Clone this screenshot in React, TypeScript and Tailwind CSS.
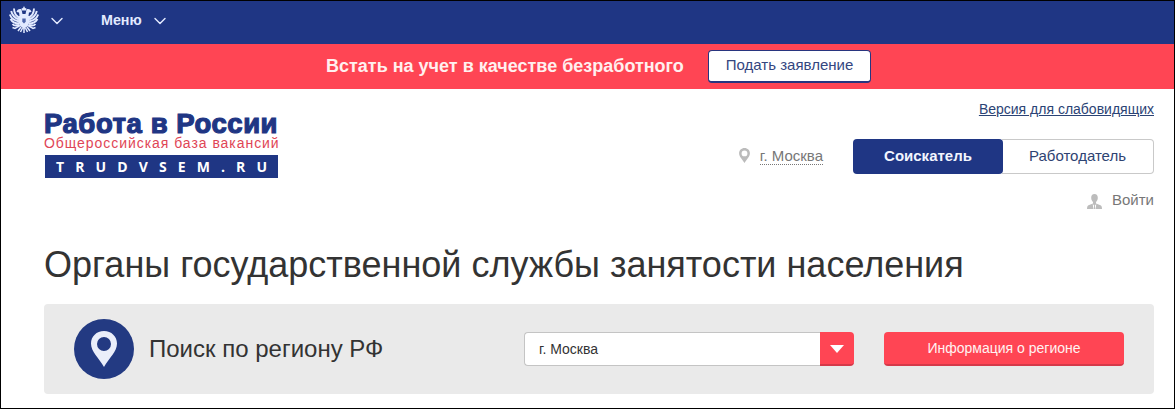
import { FiChevronDown } from 'react-icons/fi';

interface IconProps {
  className?: string;
}

function EagleIcon({ className }: IconProps) {
  return (
    <svg viewBox="0 0 30 28" className={className} fill="currentColor">
      <path d="M15 0l1 2 1.500.5-.5 2h-4l-.5-2L14 2z" />
      <path d="M12.500 3.500c-2-1-4.500 0-5 2.500l2.500.5c.5 1.500 0 3 1 4.500l4 1 4-1c1-1.500.5-3 1-4.500l2.500-.5c-.5-2.500-3-3.500-5-2.500L16.500 8h-3z" />
      <path d="M10 10h10v7c0 3-3 4-5 6-2-2-5-3-5-6z" />
      <g fill="none" stroke="currentColor" strokeWidth="1.900">
        <path d="M11 12C7 10 5 7 5 2.500M10 13.500C6 12 3 9 2.200 5M10 15.500C5 14.500 2 12 .8 8.500M10 17.500c-4 0-6.500-1-8.500-4.500M10 19c-3 1-5 1-6.500-1" />
        <path d="M19 12c4-2 6-5 6-9.500M20 13.500c4-1.500 7-4.500 7.800-8.500M20 15.500c5-1 8-3.500 9.200-7M20 17.500c4 0 6.500-1 8.500-4.500M20 19c3 1 5 1 6.500-1" />
      </g>
      <g fill="none" stroke="currentColor" strokeWidth="1.500">
        <path d="M11 19.500l-5 3-2.500-1M19 19.500l5 3 2.500-1M12 21l-3 4M18 21l3 4M15 21v6M13.500 22l-2 4M16.500 22l2 4" />
      </g>
      <path d="M13.300 12.500h3.400v3.200L15 17.500l-1.700-1.800z" fill="#4f66ab" />
    </svg>
  );
}

function PinIcon({ className }: IconProps) {
  return (
    <svg viewBox="0 0 26 36" className={className} fill="currentColor">
      <path
        fillRule="evenodd"
        d="M13 0C5.500 0 0 5.500 0 12.500 0 21 8 27 13 36c5-9 13-15 13-23.500C26 5.500 20.500 0 13 0zm0 6a7 7 0 1 1 0 14 7 7 0 0 1 0-14z"
      />
    </svg>
  );
}

function UserIcon({ className }: IconProps) {
  return (
    <svg viewBox="0 0 15 15" className={className} fill="currentColor">
      <path d="M7.500 0C5.300 0 4.200 1.500 4.200 3.700c0 2 .9 3.500 1.800 4.300V9.500L1.500 11.200C.5 11.600 0 13 0 15h15c0-2-.5-3.400-1.500-3.800L9 9.500V8c.9-.8 1.800-2.300 1.800-4.300C10.800 1.500 9.700 0 7.500 0z" />
      <path d="M5.800 10l1.300 1.400-.5 3.600h-.4zM9.200 10l-1.300 1.400.5 3.600h.4z" fill="#fff" />
    </svg>
  );
}

function TopBar() {
  return (
    <nav className="flex h-[43px] bg-[#1f3684] text-[#e2eaff]">
      <EagleIcon className="ml-2 mt-[5px] h-7 w-[30px]" />
      <FiChevronDown className="ml-2 mt-2.5 size-5" strokeWidth={1.7} />
      <span className="ml-[34px] mt-2 w-[41px] text-[14.3px] font-bold leading-[22px]">Меню</span>
      <FiChevronDown className="ml-2 mt-2.5 size-5" strokeWidth={1.7} />
    </nav>
  );
}

function Banner() {
  return (
    <div className="flex h-[45px] bg-[#ff4554] pl-[325px]">
      <span className="w-[382px] whitespace-nowrap pt-2.5 text-[18px] font-bold leading-6 text-[#fff0ef]">
        Встать на учет в качестве безработного
      </span>
      <button className="mt-1.5 h-[33px] w-[163px] rounded border border-b-2 border-[#28357f] bg-white pb-0.5 text-[15px] text-[#34467f]">
        Подать заявление
      </button>
    </div>
  );
}

function Logo() {
  return (
    <div className="w-[236px] pt-6">
      <div className="whitespace-nowrap text-[27.5px] font-bold leading-[22px] tracking-[0.55px] text-[#1f3684] [-webkit-text-stroke:1.2px_#1f3684]">
        Работа в России
      </div>
      <div className="whitespace-nowrap text-[14px] leading-4 tracking-[0.95px] text-[#df4556]">
        Общероссийская база вакансий
      </div>
      <div className="ml-px mt-1 flex h-[23px] w-[233px] items-center justify-between bg-[#1f3684] px-[11px] font-['Open_Sans',sans-serif] text-[14px] font-bold leading-none text-white">
        {'TRUDVSEM.RU'.split('').map((letter, i) => (
          <span key={i}>{letter}</span>
        ))}
      </div>
    </div>
  );
}

function Header() {
  return (
    <header className="flex h-[150px] justify-between">
      <Logo />
      <div className="flex flex-col items-end pt-2.5">
        <a href="#" className="text-[14px] leading-5 text-[#2b4375] underline">
          Версия для слабовидящих
        </a>
        <div className="mt-5 flex">
          <div className="mr-[30px] flex">
            <PinIcon className="mr-2.5 mt-[9px] h-[15px] w-[11px] text-[#bbb]" />
            <span className="mt-2 h-[18px] border-b border-dotted border-[#777] text-[15px] leading-[18px] text-[#777]">
              г. Москва
            </span>
          </div>
          <button className="h-[35px] w-[150px] rounded bg-[#1f3684] text-[15px] font-bold text-[#f2f5ff]">
            Соискатель
          </button>
          <button className="-ml-px h-[35px] w-[152px] rounded-r border border-l-0 border-[#c9c9c9] text-[15px] text-[#2e4372]">
            Работодатель
          </button>
        </div>
        <a href="#" className="mt-4 flex text-[15px] leading-5 text-[#777]">
          <UserIcon className="mr-2.5 mt-1 size-[15px] text-[#bcbcbc]" />
          Войти
        </a>
      </div>
    </header>
  );
}

function RegionSearch() {
  return (
    <div className="flex h-[90px] items-center rounded bg-[#eaeaea] px-[30px]">
      <div className="flex size-[60px] items-center justify-center rounded-full bg-[#233a82]">
        <PinIcon className="h-9 w-[26px] text-[#eaeefa]" />
      </div>
      <span className="ml-[15px] w-[375px] text-[24px] text-[#333]">Поиск по региону РФ</span>
      <div className="flex h-[34px] w-[330px]">
        <div className="flex-1 rounded-l border border-r-0 border-[#c4c4c4] bg-white pl-3.5 text-[14px] leading-8 text-[#333]">
          г. Москва
        </div>
        <button className="flex w-[34px] items-center justify-center rounded-r border-b-2 border-[#d53949] bg-[#ff4554]">
          <svg viewBox="0 0 14 8" className="mt-0.5 h-2 w-3.5">
            <path d="M0 0h14L7 8z" fill="#fff" />
          </svg>
        </button>
      </div>
      <button className="ml-[30px] h-[34px] w-60 rounded border-b-2 border-[#d53949] bg-[#ff4554] text-[14px] text-[#fff3f2]">
        Информация о регионе
      </button>
    </div>
  );
}

export default function App() {
  return (
    <div className="h-[409px] w-[1175px] overflow-hidden border border-black bg-white font-['Liberation_Sans',Arial,sans-serif]">
      <TopBar />
      <Banner />
      <main className="pl-[43px] pr-5">
        <Header />
        <h1 className="h-[65px] whitespace-nowrap pt-1.5 text-[36px] leading-10 text-[#333]">
          Органы государственной службы занятости населения
        </h1>
        <RegionSearch />
      </main>
    </div>
  );
}
